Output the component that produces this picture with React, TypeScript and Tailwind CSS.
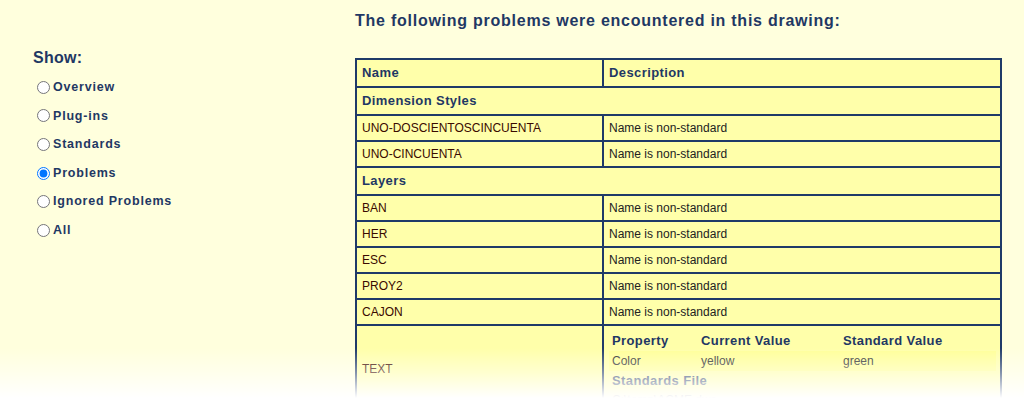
import React from "react";

const options = ["Overview", "Plug-ins", "Standards", "Problems", "Ignored Problems", "All"];

const groups: { title: string; rows: string[] }[] = [
  { title: "Dimension Styles", rows: ["UNO-DOSCIENTOSCINCUENTA", "UNO-CINCUENTA"] },
  { title: "Layers", rows: ["BAN", "HER", "ESC", "PROY2", "CAJON"] },
];

const cell = "border-2 border-[#1f3a68] bg-[#ffffaa] px-[5px] align-middle";

export default function App() {
  return (
    <div className="relative h-[398px] overflow-hidden bg-[#ffffdd] font-['Liberation_Sans',Arial,sans-serif]">
      <div className="flex">
        {/* sidebar */}
        <div className="w-[355px] shrink-0 pl-[33px] pt-[47px]">
          <h2 className="text-[16px] font-bold leading-[22px] tracking-[0.3px] text-[#1f3864]">Show:</h2>
          <div className="mt-[4px] flex flex-col pl-[4px]">
            {options.map((o) => (
              <label
                key={o}
                className="flex h-[28.6px] items-center text-[12.5px] font-bold tracking-[0.8px] text-[#1f3864]"
              >
                <input
                  type="radio"
                  name="show"
                  defaultChecked={o === "Problems"}
                  className="m-0 mr-[3px] h-[13px] w-[13px]"
                />
                {o}
              </label>
            ))}
          </div>
        </div>

        {/* report */}
        <div className="pt-[11px]">
          <h1 className="text-[16px] font-bold leading-[20px] tracking-[0.75px] text-[#1f3864]">
            The following problems were encountered in this drawing:
          </h1>
          <table className="mt-[27px] w-[647px] table-fixed border-collapse border-2 border-[#1f3a68]">
            <colgroup>
              <col className="w-[247px]" />
              <col />
            </colgroup>
            <tbody>
              <tr className="h-[28px]">
                <td className={`${cell} text-[13px] font-bold tracking-[0.4px] text-[#1f3864]`}>Name</td>
                <td className={`${cell} text-[13px] font-bold tracking-[0.4px] text-[#1f3864]`}>Description</td>
              </tr>
              {groups.map((g) => (
                <React.Fragment key={g.title}>
                  <tr className="h-[28px]">
                    <td colSpan={2} className={`${cell} text-[13px] font-bold tracking-[0.4px] text-[#1f3864]`}>
                      {g.title}
                    </td>
                  </tr>
                  {g.rows.map((r) => (
                    <tr key={r} className="h-[26px]">
                      <td className={`${cell} text-[12px] text-[#3a0a00]`}>{r}</td>
                      <td className={`${cell} text-[12px] text-[#222]`}>Name is non-standard</td>
                    </tr>
                  ))}
                </React.Fragment>
              ))}
              <tr>
                <td className={`${cell} text-[12px] text-[#3a0a00]`}>TEXT</td>
                <td className={`${cell} pt-[5px] pb-[4px] pr-[4px]`}>
                  <table className="w-full border-collapse text-left">
                    <tbody>
                      <tr className="h-[18px] text-[13px] font-bold tracking-[0.4px] text-[#1f3864]">
                        <td className="w-[89px] px-[3px]">Property</td>
                        <td className="w-[142px] px-[3px]">Current Value</td>
                        <td className="px-[3px]">Standard Value</td>
                      </tr>
                      <tr className="h-[20px] bg-[#ffff99] text-[12px] text-[#333]">
                        <td className="px-[3px]">Color</td>
                        <td className="px-[3px]">yellow</td>
                        <td className="px-[3px]">green</td>
                      </tr>
                      <tr className="h-[20px] text-[13px] font-bold tracking-[0.4px] text-[#1f3864]">
                        <td colSpan={3} className="px-[3px]">Standards File</td>
                      </tr>
                      <tr className="h-[18px] text-[12px] text-[#333]">
                        <td colSpan={3} className="px-[3px]">C:\temp\ACME.dws</td>
                      </tr>
                    </tbody>
                  </table>
                </td>
              </tr>
            </tbody>
          </table>
        </div>
      </div>

      {/* bottom fade */}
      <div className="pointer-events-none absolute inset-x-0 bottom-0 h-[50px] bg-gradient-to-b from-transparent via-white/45 to-white" />
    </div>
  );
}
